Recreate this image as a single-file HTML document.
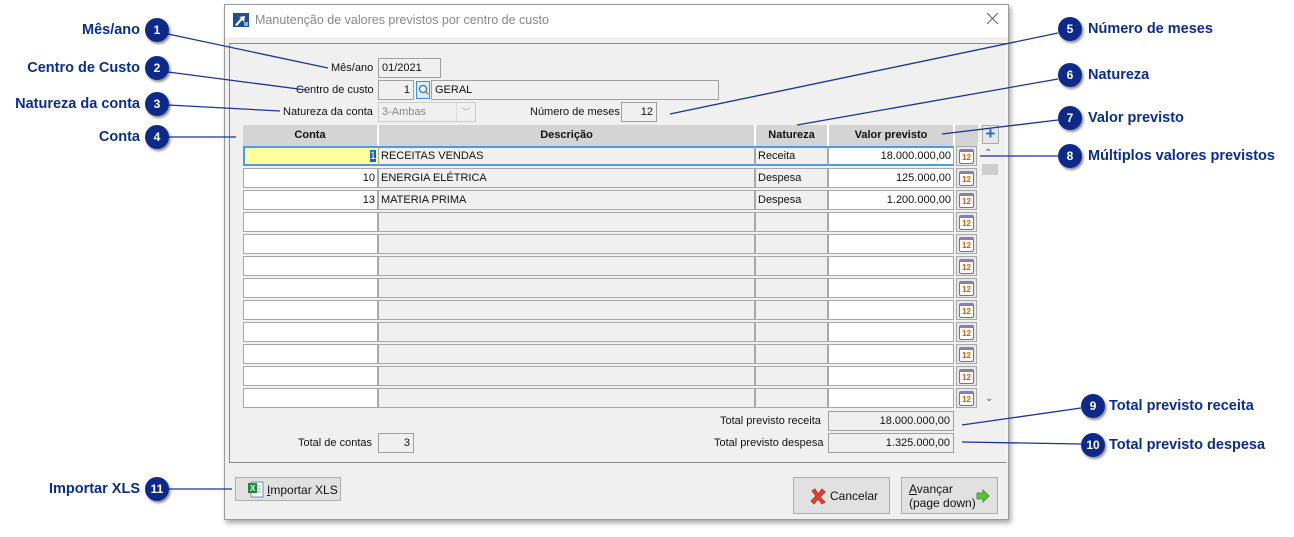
<!DOCTYPE html>
<html><head><meta charset="utf-8"><style>
*{box-sizing:border-box;margin:0;padding:0}
body{width:1294px;height:537px;background:#fff;position:relative;overflow:hidden;font-family:"Liberation Sans",sans-serif;font-size:11px;color:#111}
.a{position:absolute}
.win{left:224px;top:4px;width:785px;height:516px;background:#f0f0f0;border:1px solid #9a9a9a;box-shadow:2px 3px 5px rgba(0,0,0,.35)}
.title{left:0;top:0;width:783px;height:32px;background:#fff}
.panel{left:229px;top:43px;width:778px;height:420px;border:1px solid #888;border-right-color:#fff;border-bottom-color:#888}
.inp{border:1px solid #a0a0a0;background:#f0f0f0;height:20px;line-height:18px;padding:0 3px;font-size:11px}
.r{text-align:right}
.lbl{font-size:11px;line-height:14px}
.c{position:absolute;height:20px;border:1px solid #a8a8a8;line-height:18px;padding:0 2px;font-size:11px;white-space:nowrap}
.w{background:#fff}.g{background:#f0f0f0}
.ic{position:absolute;width:21px;height:20px;border:1px solid #a8a8a8;background:#e8e8e8}
.ic i{position:absolute;left:2px;top:2px;width:15px;height:15px;background:#fff;border:1px solid #777;border-top:3px solid #8a7fa8;border-radius:2px}
.ic i:after{content:"12";position:absolute;left:2px;top:1px;font-size:8px;line-height:9px;color:#e25a00;font-weight:bold;font-style:normal}
.hd{position:absolute;top:125px;height:21px;background:#d4d4d4;font-weight:bold;text-align:center;line-height:21px;font-size:11px;border-right:2px solid #fff}
.cl{font-family:"Liberation Sans",sans-serif;font-weight:bold;font-size:14.5px;color:#0b2d8f;position:absolute;line-height:18px;white-space:nowrap}
.btn{position:absolute;background:#e1e1e1;border:1px solid #adadad;font-size:12px}
</style></head><body>

<div class="a win">
 <div class="a title"></div>
</div>
<svg class="a" style="left:233px;top:13px" width="16" height="14"><rect width="16" height="14" fill="#1d4f91"/><path d="M2 12 L8 5 L6 4 L12 3 L11 9 L9 7 L4 13Z" fill="#fff"/><rect x="11" y="9" width="4" height="4" fill="#7fb3e0"/></svg>
<div class="a" style="left:255px;top:13px;font-size:12.5px;color:#888">Manutenção de valores previstos por centro de custo</div>
<svg class="a" style="left:987px;top:13px" width="11" height="11"><path d="M0 0 L11 11 M11 0 L0 11" stroke="#666" stroke-width="1.1"/></svg>

<div class="a panel"></div>

<div class="a lbl" style="left:331px;top:61px">Mês/ano</div>
<div class="a inp" style="left:378px;top:58px;width:63px">01/2021</div>
<div class="a lbl" style="left:296px;top:83px">Centro de custo</div>
<div class="a inp r" style="left:378px;top:80px;width:36px">1</div>
<div class="a" style="left:416px;top:81px;width:14px;height:18px;border:1px solid #3c8ee0;background:#d8ebfb"><svg width="12" height="16"><circle cx="6" cy="7" r="3.5" fill="#fff" stroke="#2a6fc0" stroke-width="1.3"/><path d="M8.5 9.5 L11 12" stroke="#d58a1a" stroke-width="2"/></svg></div>
<div class="a inp" style="left:431px;top:80px;width:288px">GERAL</div>
<div class="a lbl" style="left:283px;top:105px">Natureza da conta</div>
<div class="a inp" style="left:378px;top:102px;width:98px;color:#888;background:#f0f0f0;border-color:#ccc">3-Ambas<span style="position:absolute;right:0;top:0;width:19px;height:18px;border-left:1px solid #ddd;color:#aaa;text-align:center;font-size:9px">﹀</span></div>
<div class="a lbl" style="left:530px;top:105px">Número de meses</div>
<div class="a inp r" style="left:621px;top:102px;width:36px">12</div>

<div class="hd" style="left:243px;width:136px">Conta</div>
<div class="hd" style="left:379px;width:377px">Descrição</div>
<div class="hd" style="left:756px;width:73px">Natureza</div>
<div class="hd" style="left:829px;width:126px">Valor previsto</div>
<div class="hd" style="left:955px;width:23px;border-right:none"></div>
<div class="a" style="left:982px;top:125px;width:17px;height:19px;border:1px solid #aaa;background:#e6e6e6;color:#1a6fd6;font-weight:bold;font-size:17px;line-height:16px;text-align:center">+</div>

<div class="c" style="left:243px;top:146px;width:135px;background:#ffff9e;border:2px solid #4d9be8;border-right:none;text-align:right;line-height:16px"><span style="background:#0a63d0;color:#fff">1</span></div>
<div class="c g" style="left:378px;top:146px;width:377px;border-top:2px solid #4d9be8;border-bottom:2px solid #4d9be8;line-height:16px">RECEITAS VENDAS</div>
<div class="c g" style="left:755px;top:146px;width:73px;border-top:2px solid #4d9be8;border-bottom:2px solid #4d9be8;line-height:16px">Receita</div>
<div class="c w r" style="left:828px;top:146px;width:126px;border-top:2px solid #4d9be8;border-bottom:2px solid #4d9be8;line-height:16px">18.000.000,00</div>
<div class="ic" style="left:956px;top:146px"><i></i></div>

<div class="c w r" style="left:243px;top:168px;width:135px">10</div><div class="c g" style="left:378px;top:168px;width:377px">ENERGIA ELÉTRICA</div><div class="c g" style="left:755px;top:168px;width:73px">Despesa</div><div class="c w r" style="left:828px;top:168px;width:126px">125.000,00</div><div class="ic" style="left:956px;top:168px"><i></i></div>
<div class="c w r" style="left:243px;top:190px;width:135px">13</div><div class="c g" style="left:378px;top:190px;width:377px">MATERIA PRIMA</div><div class="c g" style="left:755px;top:190px;width:73px">Despesa</div><div class="c w r" style="left:828px;top:190px;width:126px">1.200.000,00</div><div class="ic" style="left:956px;top:190px"><i></i></div>

<div class="c w" style="left:243px;top:212px;width:135px"></div><div class="c g" style="left:378px;top:212px;width:377px"></div><div class="c g" style="left:755px;top:212px;width:73px"></div><div class="c w" style="left:828px;top:212px;width:126px"></div><div class="ic" style="left:956px;top:212px"><i></i></div>
<div class="c w" style="left:243px;top:234px;width:135px"></div><div class="c g" style="left:378px;top:234px;width:377px"></div><div class="c g" style="left:755px;top:234px;width:73px"></div><div class="c w" style="left:828px;top:234px;width:126px"></div><div class="ic" style="left:956px;top:234px"><i></i></div>
<div class="c w" style="left:243px;top:256px;width:135px"></div><div class="c g" style="left:378px;top:256px;width:377px"></div><div class="c g" style="left:755px;top:256px;width:73px"></div><div class="c w" style="left:828px;top:256px;width:126px"></div><div class="ic" style="left:956px;top:256px"><i></i></div>
<div class="c w" style="left:243px;top:278px;width:135px"></div><div class="c g" style="left:378px;top:278px;width:377px"></div><div class="c g" style="left:755px;top:278px;width:73px"></div><div class="c w" style="left:828px;top:278px;width:126px"></div><div class="ic" style="left:956px;top:278px"><i></i></div>
<div class="c w" style="left:243px;top:300px;width:135px"></div><div class="c g" style="left:378px;top:300px;width:377px"></div><div class="c g" style="left:755px;top:300px;width:73px"></div><div class="c w" style="left:828px;top:300px;width:126px"></div><div class="ic" style="left:956px;top:300px"><i></i></div>
<div class="c w" style="left:243px;top:322px;width:135px"></div><div class="c g" style="left:378px;top:322px;width:377px"></div><div class="c g" style="left:755px;top:322px;width:73px"></div><div class="c w" style="left:828px;top:322px;width:126px"></div><div class="ic" style="left:956px;top:322px"><i></i></div>
<div class="c w" style="left:243px;top:344px;width:135px"></div><div class="c g" style="left:378px;top:344px;width:377px"></div><div class="c g" style="left:755px;top:344px;width:73px"></div><div class="c w" style="left:828px;top:344px;width:126px"></div><div class="ic" style="left:956px;top:344px"><i></i></div>
<div class="c w" style="left:243px;top:366px;width:135px"></div><div class="c g" style="left:378px;top:366px;width:377px"></div><div class="c g" style="left:755px;top:366px;width:73px"></div><div class="c w" style="left:828px;top:366px;width:126px"></div><div class="ic" style="left:956px;top:366px"><i></i></div>
<div class="c w" style="left:243px;top:388px;width:135px"></div><div class="c g" style="left:378px;top:388px;width:377px"></div><div class="c g" style="left:755px;top:388px;width:73px"></div><div class="c w" style="left:828px;top:388px;width:126px"></div><div class="ic" style="left:956px;top:388px"><i></i></div>

<div class="a" style="left:984px;top:148px;font-size:10px;color:#555">&#8963;</div>
<div class="a" style="left:982px;top:164px;width:16px;height:11px;background:#cdcdcd"></div>
<div class="a" style="left:985px;top:393px;font-size:10px;color:#555">&#8964;</div>

<div class="a lbl" style="left:720px;top:414px">Total previsto receita</div>
<div class="a inp r" style="left:828px;top:411px;width:126px">18.000.000,00</div>
<div class="a lbl" style="left:714px;top:436px">Total previsto despesa</div>
<div class="a inp r" style="left:828px;top:433px;width:126px">1.325.000,00</div>
<div class="a lbl" style="left:298px;top:436px">Total de contas</div>
<div class="a inp r" style="left:378px;top:433px;width:36px">3</div>

<div class="btn" style="left:235px;top:477px;width:106px;height:24px">
 <svg class="a" style="left:12px;top:3px" width="16" height="17"><rect x="3" y="1" width="12" height="15" fill="#fff" stroke="#7a8aa8"/><path d="M6 5h7M6 8h7M6 11h7" stroke="#9ab"/><rect x="0" y="2" width="9" height="10" fill="#1f8a3a"/><text x="2" y="10" font-size="8" fill="#fff" font-family="Liberation Sans" font-weight="bold">X</text></svg>
 <span class="a" style="left:31px;top:5px"><u>I</u>mportar XLS</span></div>
<div class="btn" style="left:793px;top:477px;width:97px;height:37px">
 <svg class="a" style="left:16px;top:10px" width="16" height="17"><path d="M2 3 L5 1 L8 6 L12 1 L15 4 L10 9 L15 14 L12 16 L8 11 L4 16 L1 13 L6 8Z" fill="#e5402a" stroke="#b52a1a" stroke-width=".8"/></svg>
 <span class="a" style="left:36px;top:11px">Cancelar</span></div>
<div class="btn" style="left:901px;top:477px;width:97px;height:37px">
 <span class="a" style="left:7px;top:4px;line-height:14px"><u>A</u>vançar<br>(page down)</span>
 <svg class="a" style="left:74px;top:11px" width="14" height="14"><path d="M1 4 H7 V1 L13 7 L7 13 V10 H1Z" fill="#5ec23a" stroke="#3a8a22" stroke-width=".8"/></svg></div>

<svg class="a" style="left:0;top:0" width="1294" height="537">
<g stroke="#1a3590" stroke-width="1.3" fill="none">
<path d="M168 34 L328 68"/><path d="M168 72 L306 90"/><path d="M168 105 L280 111"/><path d="M168 137 L236 137"/>
<path d="M1058 33 L670 114"/><path d="M1058 79 L797 125"/><path d="M1058 120 L942 134"/><path d="M1058 156 L980 156"/>
<path d="M1081 408 L962 425"/><path d="M1081 444 L962 442"/><path d="M168 489 L232 489"/>
</g>
<defs><filter id="s"><feDropShadow dx="1.5" dy="2" stdDeviation="1.2" flood-opacity=".45"/></filter></defs>
<g fill="#0b2a8a" filter="url(#s)">
<circle cx="157" cy="30" r="12"/><circle cx="157" cy="68" r="12"/><circle cx="157" cy="104" r="12"/><circle cx="157" cy="137" r="12"/>
<circle cx="1070" cy="29" r="12"/><circle cx="1070" cy="75" r="12"/><circle cx="1070" cy="118" r="12"/><circle cx="1070" cy="156" r="12"/>
<circle cx="1093" cy="406" r="12"/><circle cx="1093" cy="445" r="12"/><circle cx="157" cy="489" r="12"/>
</g>
<g fill="#fff" font-family="Liberation Sans" font-weight="bold" font-size="12" text-anchor="middle">
<text x="157" y="34">1</text><text x="157" y="72">2</text><text x="157" y="108">3</text><text x="157" y="141">4</text>
<text x="1070" y="33">5</text><text x="1070" y="79">6</text><text x="1070" y="122">7</text><text x="1070" y="160">8</text>
<text x="1093" y="410">9</text><text x="1093" y="449">10</text><text x="157" y="493">11</text>
</g>
</svg>
<div class="cl" style="right:1154px;top:21px">Mês/ano</div>
<div class="cl" style="right:1154px;top:59px">Centro de Custo</div>
<div class="cl" style="right:1154px;top:95px">Natureza da conta</div>
<div class="cl" style="right:1154px;top:128px">Conta</div>
<div class="cl" style="right:1154px;top:480px">Importar XLS</div>
<div class="cl" style="left:1088px;top:20px">Número de meses</div>
<div class="cl" style="left:1088px;top:66px">Natureza</div>
<div class="cl" style="left:1088px;top:109px">Valor previsto</div>
<div class="cl" style="left:1088px;top:147px">Múltiplos valores previstos</div>
<div class="cl" style="left:1109px;top:397px">Total previsto receita</div>
<div class="cl" style="left:1109px;top:436px">Total previsto despesa</div>
</body></html>
